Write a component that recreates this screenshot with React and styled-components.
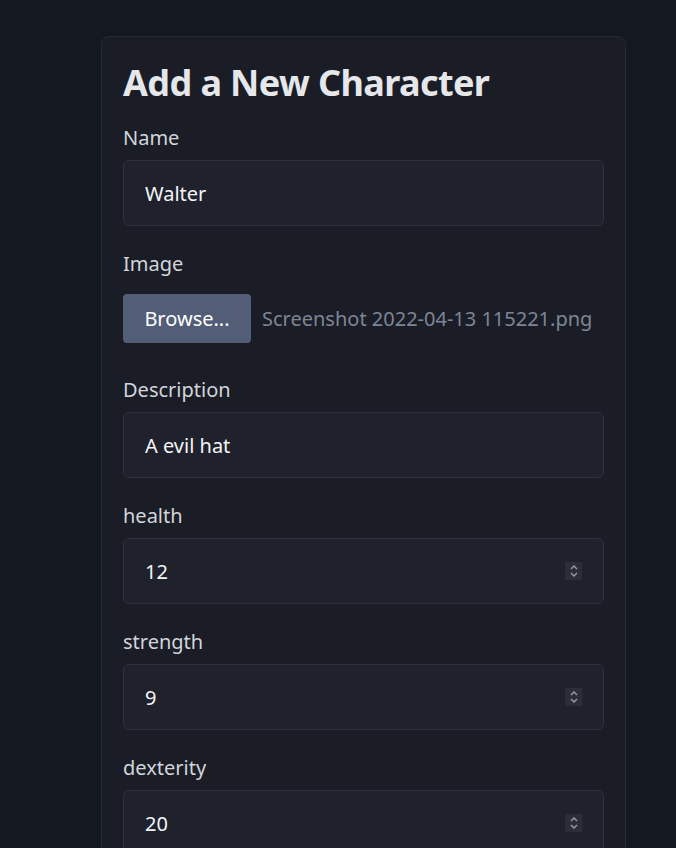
import React from "react";
import styled, { createGlobalStyle } from "styled-components";

const GlobalStyle = createGlobalStyle`
    html, body {
        margin: 0;
        padding: 0;
        background: #141821;
    }
    body {
        font-family: "Noto Sans", "Open Sans", sans-serif;
    }
`;

const fields = [
    { label: "health", value: "12" },
    { label: "strength", value: "9" },
    { label: "dexterity", value: "20" },
];

const App = () => {
    return (
        <Page>
            <GlobalStyle />
            <Card>
                <Title>Add a New Character</Title>
                <Field>
                    <Label>Name</Label>
                    <TextBox>
                        <Input defaultValue="Walter" />
                    </TextBox>
                </Field>
                <Field>
                    <Label>Image</Label>
                    <FileRow>
                        <BrowseButton type="button">Browse...</BrowseButton>
                        <FileName>Screenshot 2022-04-13 115221.png</FileName>
                    </FileRow>
                </Field>
                <Field>
                    <Label>Description</Label>
                    <TextBox>
                        <Input defaultValue="A evil hat" />
                    </TextBox>
                </Field>
                {fields.map((f) => (
                    <Field key={f.label}>
                        <Label>{f.label}</Label>
                        <TextBox>
                            <Input defaultValue={f.value} />
                            <Spinner>
                                <svg width="10" height="14" viewBox="0 0 10 14" fill="none">
                                    <path d="M2 5 L5 2 L8 5" stroke="#9a9ea8" strokeWidth="1.4" />
                                    <path d="M2 9 L5 12 L8 9" stroke="#9a9ea8" strokeWidth="1.4" />
                                </svg>
                            </Spinner>
                        </TextBox>
                    </Field>
                ))}
            </Card>
        </Page>
    );
};

const Page = styled.div`
    padding: 36px 0 0 101px;
    min-height: 100vh;
    box-sizing: border-box;
    overflow: hidden;
`;

const Card = styled.div`
    width: 525px;
    box-sizing: border-box;
    background: #1a1d26;
    border: 1px solid #262a35;
    border-radius: 8px;
    padding: 22px 21px 40px 21px;
    display: flex;
    flex-direction: column;
    gap: 23px;
`;

const Title = styled.h1`
    margin: 0 0 -7px 0;
    font-size: 36px;
    line-height: 48px;
    font-weight: 700;
    letter-spacing: -0.6px;
    color: #e5e7eb;
`;

const Field = styled.div`
    display: flex;
    flex-direction: column;
    gap: 7px;
`;

const Label = styled.label`
    font-size: 20px;
    line-height: 30px;
    color: #d1d5db;
`;

const TextBox = styled.div`
    height: 66px;
    box-sizing: border-box;
    display: flex;
    align-items: center;
    background: #1f222d;
    border: 1px solid #2d303d;
    border-radius: 6px;
    padding: 0 21px;
`;

const Input = styled.input`
    flex: 1;
    min-width: 0;
    background: transparent;
    border: none;
    outline: none;
    padding: 0;
    font-family: inherit;
    font-size: 20px;
    color: #f3f4f6;
`;

const Spinner = styled.div`
    width: 17px;
    height: 18px;
    background: #2b2e38;
    display: flex;
    align-items: center;
    justify-content: center;
`;

const FileRow = styled.div`
    display: flex;
    align-items: center;
    gap: 11px;
    margin-top: 8px;
    margin-bottom: 9px;
`;

const BrowseButton = styled.button`
    width: 128px;
    height: 49px;
    background: #525e78;
    color: #ffffff;
    border: none;
    border-radius: 4px;
    font-family: inherit;
    font-size: 20px;
    padding: 0;
`;

const FileName = styled.span`
    font-size: 20px;
    color: #7d8696;
`;

export default App;
